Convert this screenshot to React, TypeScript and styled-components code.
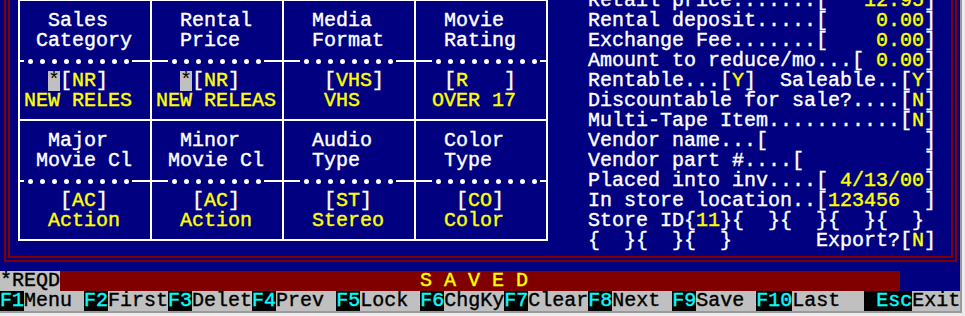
import React from "react";
import styled, { createGlobalStyle } from "styled-components";

const NAVY = "#000080";
const MAROON = "#800000";
const YELLOW = "#ffff00";
const GREY = "#c0c0c0";
const CYAN = "#00ffff";

const GlobalStyle = createGlobalStyle`
  *, *::before, *::after { box-sizing: border-box; }
  html, body { margin: 0; padding: 0; background: #e6e6e6; }
`;

interface ICell {
  head: [string, string];
  pad: number;
  star?: boolean;
  code: string;
  desc: string;
  descPad: number;
}

// separator pieces per column: leading rule width and number of dots
const seps = [
  { lead: 4, dots: 9 },
  { lead: 16, dots: 8 },
  { lead: 16, dots: 8 },
  { lead: 16, dots: 9 },
];

const cells: ICell[] = [
  { head: ["  Sales", " Category"], pad: 2, star: true, code: "NR", desc: "NEW RELES", descPad: 0 },
  { head: ["  Rental", "  Price"], pad: 2, star: true, code: "NR", desc: "NEW RELEAS", descPad: 0 },
  { head: ["  Media", "  Format"], pad: 3, code: "VHS", desc: "VHS", descPad: 3 },
  { head: ["  Movie", "  Rating"], pad: 2, code: "R   ", desc: "OVER 17", descPad: 1 },
  { head: ["  Major", " Movie Cl"], pad: 3, code: "AC", desc: "Action", descPad: 2 },
  { head: ["  Minor", " Movie Cl"], pad: 3, code: "AC", desc: "Action", descPad: 2 },
  { head: ["  Audio", "  Type"], pad: 3, code: "ST", desc: "Stereo", descPad: 2 },
  { head: ["  Color", "  Type"], pad: 3, code: "CO", desc: "Color", descPad: 2 },
];

const keys: [string, string][] = [
  ["F1", "Menu "],
  ["F2", "First"],
  ["F3", "Delet"],
  ["F4", "Prev "],
  ["F5", "Lock "],
  ["F6", "ChgKy"],
  ["F7", "Clear"],
  ["F8", "Next "],
  ["F9", "Save "],
  ["F10", "Last  "],
  [" Esc", "Exit"],
];

const sp = (n: number) => " ".repeat(n);

const App: React.FC = () => {
  return (
    <Window>
      <GlobalStyle />
      <Screen>
        <Frame>
          <Table>
            {cells.map((c, i) => {
              const sep = seps[i % 4];
              return (
                <Cell key={i}>
                  <Line>{c.head[0]}</Line>
                  <Line>{c.head[1]}</Line>
                  <Sep>
                    <Rule $w={sep.lead} />
                    {Array.from({ length: sep.dots }).map((_, d) => (
                      <Dot key={d} />
                    ))}
                    <Rule />
                  </Sep>
                  <Line>
                    {sp(c.pad)}
                    {c.star && <Star>*</Star>}[<Val>{c.code}</Val>]
                  </Line>
                  <Line>
                    {sp(c.descPad)}
                    <Val>{c.desc}</Val>
                  </Line>
                </Cell>
              );
            })}
          </Table>
          <Fields>
            <Line>Retail price.......[<Val>   12.95</Val>]</Line>
            <Line>Rental deposit.....[<Val>    0.00</Val>]</Line>
            <Line>Exchange Fee.......[<Val>    0.00</Val>]</Line>
            <Line>Amount to reduce/mo...[<Val> 0.00</Val>]</Line>
            <Line>
              Rentable...[<Val>Y</Val>]  Saleable..[<Val>Y</Val>]
            </Line>
            <Line>Discountable for sale?....[<Val>N</Val>]</Line>
            <Line>Multi-Tape Item...........[<Val>N</Val>]</Line>
            <Line>Vendor name...[{sp(13)}]</Line>
            <Line>Vendor part #....[{sp(10)}]</Line>
            <Line>Placed into inv....[<Val> 4/13/00</Val>]</Line>
            <Line>In store location..[<Val>123456  </Val>]</Line>
            <Line>
              Store ID{"{"}<Val>11</Val>{"}{  }{  }{  }{  }"}
            </Line>
            <Line>
              {"{  }{  }{  }"}
              {sp(7)}Export?[<Val>N</Val>]
            </Line>
          </Fields>
        </Frame>
        <StatusBar>
          <Reqd>*REQD</Reqd>
          <Saved>S A V E D</Saved>
        </StatusBar>
        <KeyBar>
          {keys.map(([k, label]) => (
            <React.Fragment key={k}>
              <KeyCap>{k}</KeyCap>
              <span>{label}</span>
            </React.Fragment>
          ))}
        </KeyBar>
      </Screen>
    </Window>
  );
};

const Window = styled.div`
  width: 965px;
  height: 316px;
  overflow: hidden;
  background: #ececec;
`;

const Screen = styled.div`
  width: 962px;
  height: 313px;
  overflow: hidden;
  display: flex;
  flex-direction: column;
  background: ${NAVY};
  border-right: 2px solid #9a9a9a;
  border-bottom: 2px solid #9a9a9a;
  color: #fff;
  font-family: "Liberation Mono", "DejaVu Sans Mono", monospace;
  font-size: 20px;
  line-height: 20px;
  white-space: pre;
  -webkit-text-stroke: 0.4px currentColor;
`;

const Frame = styled.div`
  flex: none;
  display: flex;
  align-items: flex-start;
  margin: -20px 3px 9px 4px;
  padding: 5px 0 5px 8px;
  border: 6px double ${MAROON};
`;

const Table = styled.div`
  margin-top: 8px;
  display: grid;
  grid-template-columns: repeat(4, 132px);
  border-top: 2px solid #fff;
  border-left: 2px solid #fff;
`;

const Cell = styled.div`
  height: 120px;
  padding: 10px 0 0 4px;
  border-right: 2px solid #fff;
  border-bottom: 2px solid #fff;
`;

const Line = styled.div`
  height: 20px;
`;

const Val = styled.span`
  color: ${YELLOW};
`;

const Star = styled.span`
  display: inline-block;
  width: 12px;
  height: 20px;
  vertical-align: top;
  background: ${GREY};
  color: #000;
  -webkit-text-stroke: 0;
`;

const Sep = styled.div`
  display: flex;
  align-items: center;
  height: 20px;
  margin-left: -4px;
`;

const Rule = styled.span<{ $w?: number }>`
  height: 2px;
  background: #fff;
  ${(p) => (p.$w ? `flex: none; width: ${p.$w}px;` : "flex: 1;")}
`;

const Dot = styled.span`
  flex: none;
  width: 12px;
  height: 20px;
  display: flex;
  align-items: center;
  justify-content: center;

  &::after {
    content: "";
    width: 5px;
    height: 5px;
    border-radius: 50%;
    background: #fff;
  }
`;

const Fields = styled.div`
  margin-left: 40px;
`;

const StatusBar = styled.div`
  flex: none;
  display: flex;
  height: 20px;
`;

const Reqd = styled.span`
  background: ${GREY};
  color: #000;
`;

const Saved = styled.span`
  width: 840px;
  padding-left: 360px;
  background: ${MAROON};
  color: ${YELLOW};
`;

const KeyBar = styled.div`
  flex: none;
  display: flex;
  width: 960px;
  height: 20px;
  background: ${GREY};
  color: #000;
`;

const KeyCap = styled.span`
  background: #000;
  color: ${CYAN};
`;

export default App;
